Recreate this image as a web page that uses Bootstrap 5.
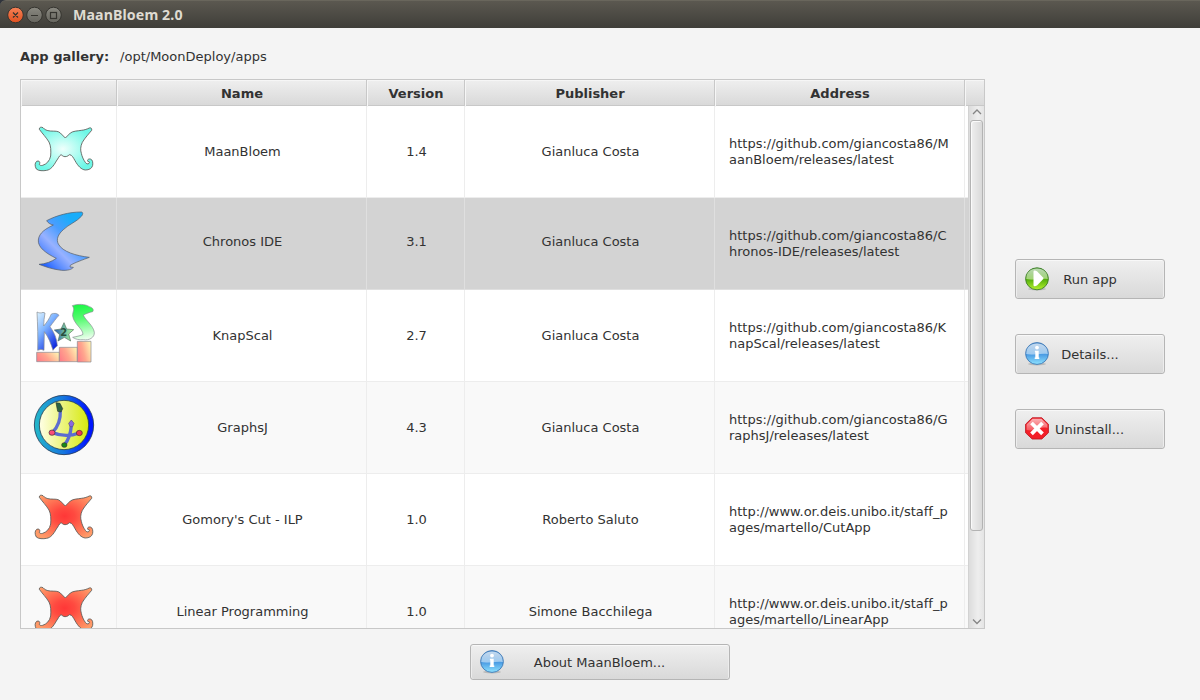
<!DOCTYPE html>
<html lang="en">
<head>
<meta charset="utf-8">
<title>MaanBloem 2.0</title>
<link rel="stylesheet" href="https://cdn.jsdelivr.net/npm/bootstrap@5.3.0/dist/css/bootstrap.min.css">
<style>
body{width:1200px;height:700px;overflow:hidden;background:#f4f4f4;color:#323232;font:13px/16px "DejaVu Sans",sans-serif;font-variant-ligatures:none}
.titlebar{height:28px;background:linear-gradient(#5b5850,#3f3e39);border-radius:6px 0 0 0;padding:0 6px;border-top:1px solid #69665c;color:#dfdbd2}
.titlebar h1{font:bold 14.2px/28px "Noto Sans","Open Sans",sans-serif;margin:0 0 0 10px;letter-spacing:.1px}
.corner{background:#30343c}
.gallery-path{height:16px;margin:21px 20px 14px;gap:11px}
.main-area{height:550px;padding-left:20px;gap:30px}
.app-grid{width:965px;height:550px;border:1px solid #c8c8c8;background:#fff;overflow:hidden}
.cols{display:grid;grid-template-columns:96px 250px 98px 250px 250px 1fr}
.grid-head{height:26px;flex:none;font-weight:bold;text-align:center;line-height:27px;background:linear-gradient(#efefef,#d9d9d9);border-bottom:1px solid #c8c8c8}
.grid-head>div{border-right:1px solid #c8c8c8;box-shadow:inset 1px 1px #f6f6f6;padding-left:1px}
.grid-head>div:last-child{border-right:0}
.grid-body{height:522px}
.grid-rows{width:947px;overflow:hidden}
.app-row{height:92px;border-bottom:1px solid #ededed}
.app-row:nth-child(even){background:#f9f9f9}
.app-row.selected{background:#d3d3d3;border-color:#dfdfdf}
.app-row>div{border-right:1px solid #ededed;display:flex;align-items:center;justify-content:center;height:91px;padding-left:2px}
.app-row.selected>div{border-color:#dfdfdf}
.app-row>div:last-child{border:0}
.app-row>div:first-child{padding-left:0}
.app-row>.address{justify-content:flex-start;padding-left:14px;white-space:nowrap}
.app-row.selected>.lifted{padding-bottom:4px}
.app-row svg{width:95px;height:91px;display:block}
.scroller{width:16px;height:522px;background:linear-gradient(90deg,#dcdcdc,#eeeeee 60%,#e4e4e4);border-left:1px solid #d2d2d2}
.scroller svg{width:15px;height:14px;display:block;flex:none}
.thumb{width:13px;height:411px;margin-left:1px;border:1px solid #b3b3b3;border-radius:3px;background:linear-gradient(90deg,#efefef,#d9d9d9);box-shadow:inset 1px 1px #fafafa}
.side{width:150px;padding-top:180px;gap:35px}
.fx-btn{--bs-btn-padding-x:9px;--bs-btn-padding-y:0;--bs-btn-font-size:13px;--bs-btn-line-height:16px;--bs-btn-color:#323232;--bs-btn-border-color:#b5b5b5;--bs-btn-border-radius:3px;height:40px;background:linear-gradient(#efefef,#d9d9d9);box-shadow:inset 0 1px #f8f8f8,inset 1px 0 #ededed,inset -1px 0 #ededed}
.fx-btn svg{width:24px;height:24px;flex:none}
.fx-btn span{flex:1;text-align:center;padding-top:2px}
.run span,.details span{padding-right:24px}.remove span{padding-right:25px}
.about{width:260px;height:36px;margin:15px 0 0 470px}
.about span{padding-right:25px}
</style>
</head>
<body>
<svg width="0" height="0" class="position-absolute">
<defs>
<radialGradient id="mint" cx="48%" cy="50%" r="55%"><stop offset="0" stop-color="#effffc"/><stop offset=".55" stop-color="#a8fcf0"/><stop offset="1" stop-color="#6df7e6"/></radialGradient>
<radialGradient id="ember" cx="51%" cy="48%" r="60%"><stop offset="0" stop-color="#ff3737"/><stop offset=".3" stop-color="#ff4a40"/><stop offset="1" stop-color="#ff9b68"/></radialGradient>
<linearGradient id="chron" gradientUnits="userSpaceOnUse" x1="60" y1="205" x2="175" y2="90"><stop offset="0" stop-color="#1257ff"/><stop offset=".22" stop-color="#5a8cff"/><stop offset=".42" stop-color="#98b2ff"/><stop offset=".7" stop-color="#4a9dff"/><stop offset="1" stop-color="#18adfa"/></linearGradient>
<linearGradient id="kfill" x1="0" y1="0" x2=".7" y2="1"><stop offset="0" stop-color="#dff4ff"/><stop offset=".45" stop-color="#7fb4ff"/><stop offset="1" stop-color="#0d28e0"/></linearGradient>
<linearGradient id="sfill" x1=".4" y1="0" x2=".5" y2="1"><stop offset="0" stop-color="#1cf745"/><stop offset=".4" stop-color="#56fb70"/><stop offset="1" stop-color="#effff0"/></linearGradient>
<linearGradient id="starfill"><stop offset="0" stop-color="#2456b8"/><stop offset=".5" stop-color="#6fb8a0"/><stop offset="1" stop-color="#b0ffa0"/></linearGradient>
<linearGradient id="box" x1="0" y1=".7" x2="1" y2=".3"><stop offset="0" stop-color="#ff8088"/><stop offset=".45" stop-color="#ffa68e"/><stop offset="1" stop-color="#ffeeb0"/></linearGradient>
<linearGradient id="ring"><stop offset="0" stop-color="#24b9c9"/><stop offset=".5" stop-color="#1574df"/><stop offset=".9" stop-color="#0016ff"/></linearGradient>
<linearGradient id="disc"><stop offset="0" stop-color="#ffffe6"/><stop offset="1" stop-color="#d6e90d"/></linearGradient>
<linearGradient id="blue" x1="0" y1="0" x2="0" y2="1"><stop offset="0" stop-color="#5593cf"/><stop offset=".5" stop-color="#78b5ea"/><stop offset=".52" stop-color="#4798e2"/><stop offset="1" stop-color="#8fe3ff"/></linearGradient>
<linearGradient id="green" x1="0" y1="0" x2="0" y2="1"><stop offset="0" stop-color="#3d9426"/><stop offset=".5" stop-color="#7fc440"/><stop offset=".52" stop-color="#52ad0b"/><stop offset="1" stop-color="#b5f22e"/></linearGradient>
<linearGradient id="gloss" x1="0" y1="0" x2="0" y2="1"><stop offset="0" stop-color="#fff" stop-opacity=".65"/><stop offset="1" stop-color="#fff" stop-opacity=".25"/></linearGradient>
<path id="wings" stroke="#5c5c58" stroke-width="2.6" stroke-linejoin="round" d="M58 70C57 64 63 62 69 65C74 71 80 74 91 75C106 76 113 74 121 81L136 96L151 81C159 75 172 75 184 73C194 72 202 69 208 66C213 64 216 68 215 73C207 83 195 95 187 109C181 121 181 133 184 142C186 151 190 161 196 169C199 174 204 175 207 172C210 168 208 166 204 167C200 162 205 158 211 159C218 161 219 169 218 178C216 187 208 192 196 192C184 191 174 180 165 164C160 155 156 147 149 146C145 148 143 152 135 152C129 152 127 148 123 146C117 150 115 157 109 165C100 181 92 191 80 193C70 195 55 195 49 189C44 180 44 171 50 166C56 163 61 167 59 173C56 176 61 180 68 178C80 174 89 165 92 150C93 134 93 120 87 108C80 96 65 80 58 70Z"/>
<g id="infoicon"><ellipse cx="12" cy="22" rx="9" ry="1.5" fill="#777" opacity=".35"/><ellipse cx="12" cy="11.5" rx="11.4" ry="10.9" fill="url(#blue)" stroke="#3f78b4" stroke-width=".9"/><path d="M1.5 12C1 5 6 1.5 12 1.5S23 5 22.5 12C16 10 11 15 1.5 12Z" fill="url(#gloss)"/><circle cx="12" cy="5.6" r="1.9" fill="#fff"/><path d="M9.9 8.7H13.7V15.5H14.3V17H9.7V15.5H10.3V10.2H9.9Z" fill="#fff"/></g>
</defs>
</svg>
<div class="corner">
<header class="titlebar d-flex align-items-center">
<svg width="57" height="28" viewBox="0 0 57 28" class="flex-shrink-0"><defs><linearGradient id="gr" x1="0" y1="0" x2="0" y2="1"><stop offset="0" stop-color="#8a8981"/><stop offset="1" stop-color="#66655e"/></linearGradient><linearGradient id="or" x1="0" y1="0" x2="0" y2="1"><stop offset="0" stop-color="#f68257"/><stop offset="1" stop-color="#e0501f"/></linearGradient></defs>
<g stroke="#35342f"><circle cx="9.5" cy="14" r="7.8" fill="url(#or)"/><circle cx="28.5" cy="14" r="7.8" fill="url(#gr)"/><circle cx="47.5" cy="14" r="7.8" fill="url(#gr)"/></g>
<g stroke="#35342f" stroke-width="1.2" fill="none"><path d="M7 11.5L12 16.5M12 11.5L7 16.5M25 14.5H32"/><rect x="44.5" y="11.5" width="6" height="6"/></g></svg>
<h1>MaanBloem 2.0</h1>
</header>
</div>
<div class="gallery-path d-flex"><strong>App gallery:</strong><span>/opt/MoonDeploy/apps</span></div>
<main class="main-area d-flex">
<section class="app-grid d-flex flex-column">
<div class="grid-head cols"><div></div><div>Name</div><div>Version</div><div>Publisher</div><div>Address</div><div></div></div>
<div class="grid-body d-flex">
<div class="grid-rows">
<div class="app-row cols"><div><svg viewBox="3 0 285 273"><use href="#wings" fill="url(#mint)"/></svg></div><div>MaanBloem</div><div>1.4</div><div>Gianluca Costa</div><div class="address">https://github.com/giancosta86/M<br>aanBloem/releases/latest</div><div></div></div>
<div class="app-row cols selected"><div><svg viewBox="3 6 285 273"><path fill="url(#chron)" stroke="#56606c" stroke-width="2.2" stroke-linejoin="round" d="M80 74C110 58 148 48 183 48C190 48 189 55 185 60C171 77 146 85 130 101C114 115 108 130 115 144C128 168 168 179 208 184C190 191 163 200 151 208L150 213L160 214C156 220 144 224 125 223C97 220 76 212 57 205C75 204 96 197 109 187C78 172 53 154 55 132C57 109 80 97 100 87C91 85 84 81 80 74Z"/></svg></div><div class="lifted">Chronos IDE</div><div class="lifted">3.1</div><div class="lifted">Gianluca Costa</div><div class="address">https://github.com/giancosta86/C<br>hronos-IDE/releases/latest</div><div></div></div>
<div class="app-row cols"><div><svg viewBox="3 0 285 273"><g stroke="#858a90" stroke-width="2"><path fill="url(#kfill)" d="M51 66C57 69 62 70 69 67L75 69C73 82 71 94 71 108C80 98 88 86 94 72C102 69 111 69 117 76C109 84 99 98 90 110C104 129 111 148 112 168C107 171 104 174 99 181C93 161 86 142 73 125L72 181L63 178L53 181C54 145 53 105 51 66Z"/><path fill="url(#sfill)" d="M157 47C174 41 196 42 208 50C219 53 222 60 218 65C207 67 199 71 190 75C196 91 220 106 223 127C224 143 207 152 190 149C177 150 166 148 158 142C171 139 184 137 189 133C188 115 162 103 158 78C157 65 166 58 157 47Z"/><path fill="url(#starfill)" stroke="#56725e" d="M132 98L140 117L161 119L146 132L152 153L133 142L114 153L119 134L103 120L123 117Z"/><path fill="url(#box)" d="M50 187H118V215H50Z"/><path fill="url(#box)" d="M118 172H172V215H118Z"/><path fill="url(#box)" d="M172 154H213V216H172Z"/></g><text x="121" y="139" font-family="DejaVu Sans" font-size="30" font-weight="bold" fill="#284d3c">2</text></svg></div><div>KnapScal</div><div>2.7</div><div>Gianluca Costa</div><div class="address">https://github.com/giancosta86/K<br>napScal/releases/latest</div><div></div></div>
<div class="app-row cols"><div><svg viewBox="3 6 285 273"><circle cx="132" cy="135" r="89" fill="url(#ring)" stroke="#233957" stroke-width="2.5"/><circle cx="132" cy="135" r="74" fill="url(#disc)" stroke="#28424d" stroke-width="2.5"/><g fill="none" stroke="#5c6cd0" stroke-width="10"><path d="M121 92C122 119 113 142 97 158Q137 174 178 159M154 137Q151 174 133 195"/></g><path fill="#2c6443" stroke="#27372e" stroke-width="2" d="M108 68L120 70L128 86L123 96L113 94Z"/><path fill="#8a68e0" stroke="#575080" stroke-width="2" d="M154 120L162 130L158 140H150L146 130Z"/><g stroke="#403030" stroke-width="2"><ellipse cx="96" cy="158" rx="9" ry="8" fill="#fa4c78"/><ellipse cx="178" cy="159" rx="9" ry="8" fill="#ef384f"/><ellipse cx="133" cy="195" rx="8" ry="7" fill="#158b15"/></g></svg></div><div>GraphsJ</div><div>4.3</div><div>Gianluca Costa</div><div class="address">https://github.com/giancosta86/G<br>raphsJ/releases/latest</div><div></div></div>
<div class="app-row cols"><div><svg viewBox="3 0 285 273"><use href="#wings" fill="url(#ember)"/></svg></div><div>Gomory's Cut - ILP</div><div>1.0</div><div>Roberto Saluto</div><div class="address">http://www.or.deis.unibo.it/staff_p<br>ages/martello/CutApp</div><div></div></div>
<div class="app-row cols"><div><svg viewBox="3 0 285 273"><use href="#wings" fill="url(#ember)"/></svg></div><div>Linear Programming</div><div>1.0</div><div>Simone Bacchilega</div><div class="address">http://www.or.deis.unibo.it/staff_p<br>ages/martello/LinearApp</div><div></div></div>
</div>
<div class="scroller d-flex flex-column">
<svg viewBox="0 0 15 14"><path d="M4 8L8 4L12 8" fill="none" stroke="#858585" stroke-width="1.3"/></svg>
<div class="thumb"></div>
<svg class="mt-auto" viewBox="0 0 15 14"><path d="M4 5.5L8 9.5L12 5.5" fill="none" stroke="#858585" stroke-width="1.3"/></svg>
</div>
</div>
</section>
<aside class="side d-flex flex-column">
<button class="btn fx-btn run d-flex align-items-center"><svg viewBox="0 0 24 24"><ellipse cx="12" cy="22" rx="9" ry="1.5" fill="#777" opacity=".35"/><ellipse cx="12" cy="11.8" rx="11.4" ry="11" fill="url(#green)" stroke="#3e7d2b" stroke-width=".9"/><path d="M1.5 12C1 5 6 1.5 12 1.5S23 5 22.5 12C16 10 11 15 1.5 12Z" fill="url(#gloss)"/><path d="M8.5 4.8Q8.5 3.2 10 3.6L12 4.2L18.3 10.8V12L12 18.6L10 19.2Q8.5 19.6 8.5 18Z" fill="#fff"/></svg><span>Run app</span></button>
<button class="btn fx-btn details d-flex align-items-center"><svg viewBox="0 0 24 24"><use href="#infoicon"/></svg><span>Details...</span></button>
<button class="btn fx-btn remove d-flex align-items-center"><svg viewBox="0 0 24 24"><path d="M7.2 .8H16.8L23.4 7.2V15.8L16.8 22H7.2L.6 15.8V7.2Z" fill="#f31f28" stroke="#c01822" stroke-width=".9"/><path d="M7.5 1.7H16.5L22.4 7.5V11C16 9 11 15 1.6 13V7.5Z" fill="url(#gloss)"/><path d="M6.5 6L17.5 16.8M17.5 6L6.5 16.8" stroke="#fff" stroke-width="3.8"/></svg><span>Uninstall...</span></button>
</aside>
</main>
<button class="btn fx-btn about d-flex align-items-center"><svg viewBox="0 0 24 24"><use href="#infoicon"/></svg><span>About MaanBloem...</span></button>
<script src="https://cdn.jsdelivr.net/npm/bootstrap@5.3.0/dist/js/bootstrap.bundle.min.js"></script>
</body>
</html>
